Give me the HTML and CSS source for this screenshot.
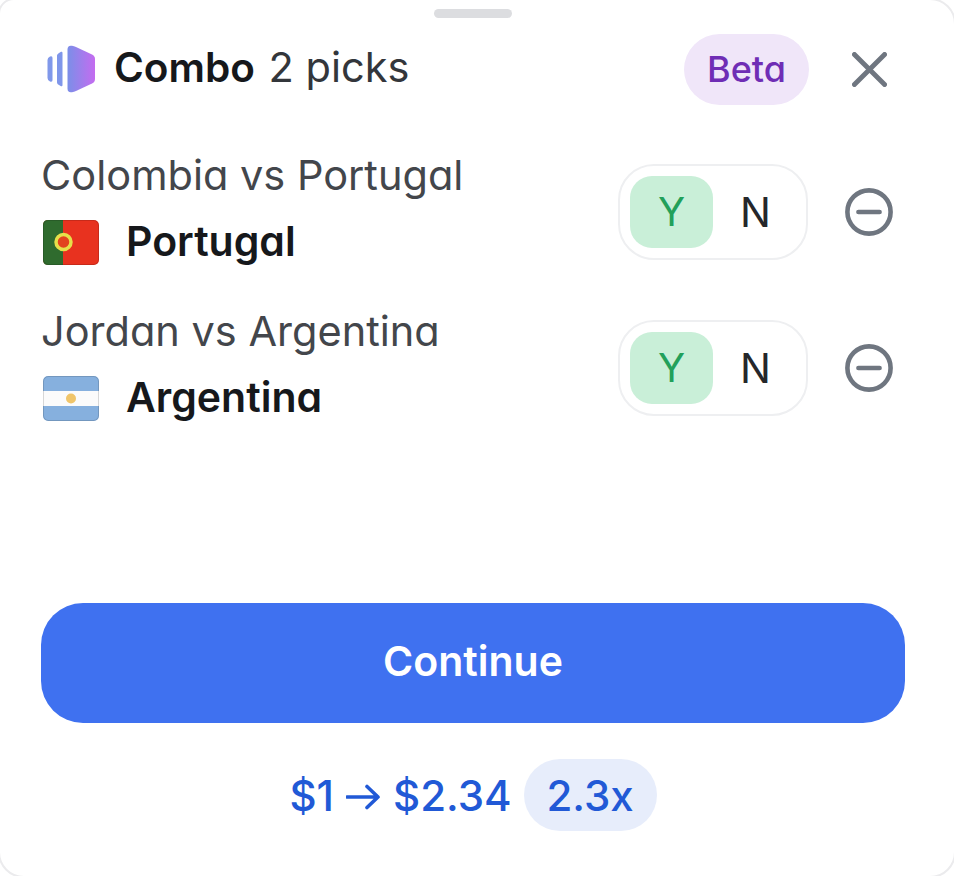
FILE: index.html
```html
<!DOCTYPE html>
<html>
<head>
    <title>Combo</title>
    <link rel="stylesheet" href="styles.css">
</head>
<body>
    <section class="sheet">
        <div class="grabber"></div>

        <header class="sheet-head">
            <svg class="combo-icon" width="48" height="48" viewBox="0 0 48 48">
                <defs>
                    <linearGradient id="comboGrad" x1="0" y1="0" x2="1" y2="0">
                        <stop offset="0" stop-color="#7b8fe8"/>
                        <stop offset="1" stop-color="#c46cf0"/>
                    </linearGradient>
                </defs>
                <path d="M0.500 15 Q0.500 12.500 3 11.500 Q5.500 10.500 5.500 13 V35 Q5.500 37.500 3 36.500 Q0.500 35.500 0.500 33 Z" fill="#8098ea"/>
                <path d="M10 10.500 Q10 9 12 8 L14 6.800 Q15.500 6.200 15.500 8 V40 Q15.500 41.800 14 41.200 L12 40 Q10 39 10 37.500 Z" fill="#7f96ea"/>
                <path d="M20.500 4.500 Q20.500 0 25 0.800 Q27 1.200 29 2 L45 9.500 Q48 11 48 14 V34 Q48 37 45 38.500 L29 46 Q27 46.800 25 47.200 Q20.500 48 20.500 43.500 Z" fill="url(#comboGrad)"/>
            </svg>
            <h1 class="title"><b>Combo</b> 2 picks</h1>
            <span class="beta">Beta</span>
            <svg class="close" width="35" height="35" viewBox="0 0 36 36">
                <path d="M2.500 2.500 L33.500 33.500 M33.500 2.500 L2.500 33.500" stroke="#6f7680" stroke-width="5" stroke-linecap="round"/>
            </svg>
        </header>

        <div class="picks">
            <div class="pick">
                <div class="pick-info">
                    <div class="match">Colombia vs Portugal</div>
                    <div class="team">
                        <svg class="flag" width="56" height="45" viewBox="0 0 56 45">
                            <rect width="56" height="45" rx="5" fill="#e8321f"/>
                            <path d="M5 0 H20 V45 H5 Q0 45 0 40 V5 Q0 0 5 0 Z" fill="#2f6b2e"/>
                            <circle cx="20.500" cy="22" r="7.500" fill="#e2431f" stroke="#e6e04a" stroke-width="3.500"/>
                            <rect x="0.500" y="0.500" width="55" height="44" rx="5" fill="none" stroke="#000000" stroke-opacity="0.14"/>
                        </svg>
                        <span>Portugal</span>
                    </div>
                </div>
                <div class="toggle">
                    <span class="opt opt-on">Y</span>
                    <span class="opt">N</span>
                </div>
                <svg class="remove" width="48" height="48" viewBox="0 0 50 50">
                    <circle cx="25" cy="25" r="22.500" fill="none" stroke="#6f7680" stroke-width="4.800"/>
                    <path d="M14 25 H36" stroke="#6f7680" stroke-width="4.800" stroke-linecap="round"/>
                </svg>
            </div>

            <div class="pick">
                <div class="pick-info">
                    <div class="match">Jordan vs Argentina</div>
                    <div class="team">
                        <svg class="flag" width="56" height="45" viewBox="0 0 56 45">
                            <rect width="56" height="45" rx="5" fill="#86b0de"/>
                            <rect y="15" width="56" height="15" fill="#fbfbfb"/>
                            <circle cx="28" cy="22.500" r="5" fill="#f0c56a"/>
                            <rect x="0.500" y="0.500" width="55" height="44" rx="5" fill="none" stroke="#000000" stroke-opacity="0.14"/>
                        </svg>
                        <span>Argentina</span>
                    </div>
                </div>
                <div class="toggle">
                    <span class="opt opt-on">Y</span>
                    <span class="opt">N</span>
                </div>
                <svg class="remove" width="48" height="48" viewBox="0 0 50 50">
                    <circle cx="25" cy="25" r="22.500" fill="none" stroke="#6f7680" stroke-width="4.800"/>
                    <path d="M14 25 H36" stroke="#6f7680" stroke-width="4.800" stroke-linecap="round"/>
                </svg>
            </div>
        </div>

        <button class="continue" type="button">Continue</button>

        <div class="payout">
            <span>$1</span>
            <svg class="arrow" width="34" height="26" viewBox="0 0 34 26">
                <path d="M1 13 H32 M21 2.500 L32 13 L21 23.500" fill="none" stroke="#2159d6" stroke-width="3.600" stroke-linecap="round" stroke-linejoin="round"/>
            </svg>
            <span>$2.34</span>
            <span class="multiplier">2.3x</span>
        </div>
    </section>
</body>
</html>
```

FILE: styles.css
```css
* {
    box-sizing: border-box;
}

html, body {
    margin: 0;
    height: 100%;
    overflow: hidden;
}

body {
    background-color: #ffffff;
    color: #16181b;
    font-family: "Inter", "Liberation Sans", sans-serif;
    font-feature-settings: "cv11";
}

/* sheet runs 2px past the window so only its rounded corners show the border */
.sheet {
    display: flex;
    flex-direction: column;
    width: 958px;
    height: 880px;
    margin: -2px;
    padding: 9px 49px 0 41px;
    background-color: #ffffff;
    border: 2px solid #ebebed;
    border-radius: 16px 26px 26px 26px;
    overflow: hidden;
}

.grabber {
    align-self: center;
    width: 78px;
    height: 9px;
    background-color: #dcdde0;
    border-radius: 5px;
}

.sheet-head {
    display: flex;
    align-items: center;
    min-height: 72px;
    margin-top: 15px;
    padding-left: 6px;
}

.combo-icon {
    flex-shrink: 0;
}

.title {
    flex: 1;
    margin: 0 0 5px 19px;
    color: #33363b;
    font-size: 41.500px;
    font-weight: 400;
}

.title b {
    margin-right: 2px;
    color: #16181b;
    font-size: 40.500px;
    font-weight: 600;
}

.beta {
    display: flex;
    align-items: center;
    justify-content: center;
    width: 125px;
    height: 71px;
    margin-left: 2px;
    background-color: #f0e6f9;
    border-radius: 36px;
    color: #6f2db5;
    font-size: 36px;
    font-weight: 500;
}

.close {
    margin-left: 43px;
    margin-right: 18px;
}

.picks {
    display: flex;
    flex-direction: column;
    gap: 50px;
    margin-top: 53px;
    height: 445px;
}

.pick {
    display: flex;
    align-items: center;
    height: 106px;
}

.pick-info {
    flex: 1;
    margin-bottom: 6px;
}

.match {
    color: #43464b;
    font-size: 41.500px;
    line-height: 46px;
}

.team {
    display: flex;
    align-items: center;
    gap: 27px;
    margin-top: 20px;
    font-size: 41px;
    font-weight: 600;
    line-height: 46px;
}

.flag {
    flex-shrink: 0;
    margin-top: 2px;
    margin-left: 2px;
}

.toggle {
    display: flex;
    width: 190px;
    height: 96px;
    padding: 10px;
    border: 2px solid #eeeff1;
    border-radius: 36px;
    margin-top: 1px;
}

.opt {
    display: flex;
    flex: 0 0 83px;
    align-items: center;
    justify-content: center;
    padding-left: 2px;
    color: #25272b;
    font-size: 41px;
    border-radius: 22px;
}

.opt-on {
    padding-left: 0;
    background-color: #c9efd8;
    color: #22a05a;
    font-size: 40px;
}

.remove {
    margin-left: 37px;
    margin-right: 12px;
    margin-top: 2px;
}

.continue {
    width: 864px;
    height: 120px;
    padding: 0 0 4px;
    background-color: #3f71f0;
    border: none;
    border-radius: 42px;
    color: #ffffff;
    font-family: inherit;
    font-size: 41px;
    font-weight: 600;
}

.payout {
    display: flex;
    align-items: center;
    justify-content: center;
    width: 864px;
    margin-top: 36px;
    color: #2159d6;
    font-size: 42px;
    font-weight: 500;
}

.arrow {
    margin: 3px 13px 0 12px;
}

.multiplier {
    display: flex;
    align-items: center;
    justify-content: center;
    width: 133px;
    height: 72px;
    margin-left: 12px;
    background-color: #e7edfb;
    border-radius: 36px;
}
```
